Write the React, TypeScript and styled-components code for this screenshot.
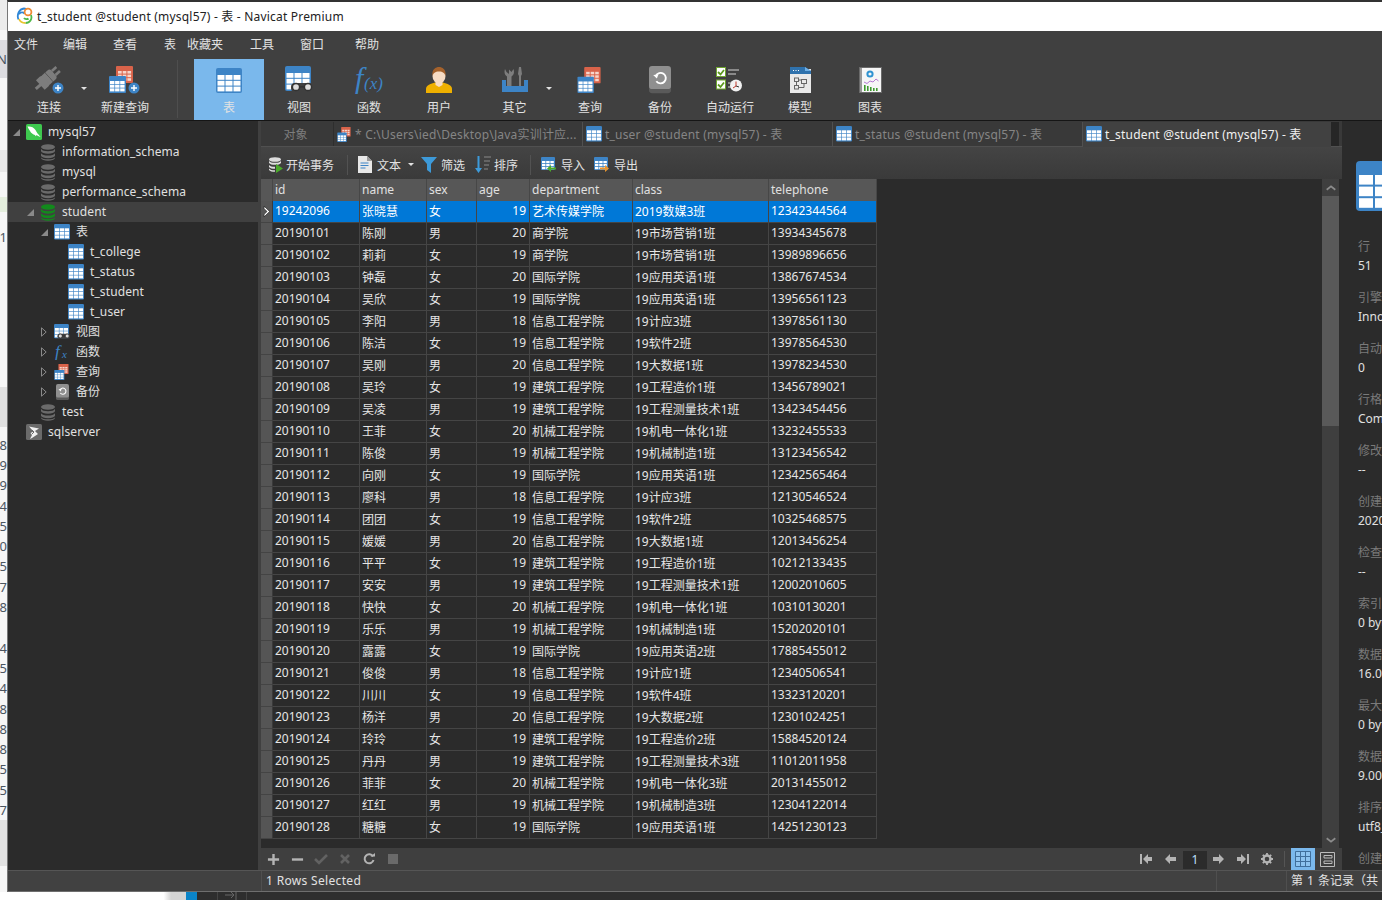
import React from 'react';
import { createGlobalStyle, styled } from 'styled-components';

const TABLE_COLUMNS = '12px 87px 67px 50px 53px 103px 136px 108px';

const rows = [
  ['19242096', '张晓慧', '女', '19', '艺术传媒学院', '2019数媒3班', '12342344564'],
  ['20190101', '陈刚', '男', '20', '商学院', '19市场营销1班', '13934345678'],
  ['20190102', '莉莉', '女', '19', '商学院', '19市场营销1班', '13989896656'],
  ['20190103', '钟磊', '女', '20', '国际学院', '19应用英语1班', '13867674534'],
  ['20190104', '吴欣', '女', '19', '国际学院', '19应用英语1班', '13956561123'],
  ['20190105', '李阳', '男', '18', '信息工程学院', '19计应3班', '13978561130'],
  ['20190106', '陈洁', '女', '19', '信息工程学院', '19软件2班', '13978564530'],
  ['20190107', '吴刚', '男', '20', '信息工程学院', '19大数据1班', '13978234530'],
  ['20190108', '吴玲', '女', '19', '建筑工程学院', '19工程造价1班', '13456789021'],
  ['20190109', '吴凌', '男', '19', '建筑工程学院', '19工程测量技术1班', '13423454456'],
  ['20190110', '王菲', '女', '20', '机械工程学院', '19机电一体化1班', '13232455533'],
  ['20190111', '陈俊', '男', '19', '机械工程学院', '19机械制造1班', '13123456542'],
  ['20190112', '向刚', '女', '19', '国际学院', '19应用英语1班', '12342565464'],
  ['20190113', '廖科', '男', '18', '信息工程学院', '19计应3班', '12130546524'],
  ['20190114', '团团', '女', '19', '信息工程学院', '19软件2班', '10325468575'],
  ['20190115', '媛媛', '男', '20', '信息工程学院', '19大数据1班', '12013456254'],
  ['20190116', '平平', '女', '19', '建筑工程学院', '19工程造价1班', '10212133435'],
  ['20190117', '安安', '男', '19', '建筑工程学院', '19工程测量技术1班', '12002010605'],
  ['20190118', '快快', '女', '20', '机械工程学院', '19机电一体化1班', '10310130201'],
  ['20190119', '乐乐', '男', '19', '机械工程学院', '19机械制造1班', '15202020101'],
  ['20190120', '露露', '女', '19', '国际学院', '19应用英语2班', '17885455012'],
  ['20190121', '俊俊', '男', '18', '信息工程学院', '19计应1班', '12340506541'],
  ['20190122', '川川', '女', '19', '信息工程学院', '19软件4班', '13323120201'],
  ['20190123', '杨洋', '男', '20', '信息工程学院', '19大数据2班', '12301024251'],
  ['20190124', '玲玲', '女', '19', '建筑工程学院', '19工程造价2班', '15884520124'],
  ['20190125', '丹丹', '男', '19', '建筑工程学院', '19工程测量技术3班', '11012011958'],
  ['20190126', '菲菲', '女', '20', '机械工程学院', '19机电一体化3班', '20131455012'],
  ['20190127', '红红', '男', '19', '机械工程学院', '19机械制造3班', '12304122014'],
  ['20190128', '糖糖', '女', '19', '国际学院', '19应用英语1班', '14251230123'],
];

const menus = [
  { label: '文件', gap: 6 },
  { label: '编辑', gap: 25 },
  { label: '查看', gap: 26 },
  { label: '表', gap: 27 },
  { label: '收藏夹', gap: 11 },
  { label: '工具', gap: 27 },
  { label: '窗口', gap: 26 },
  { label: '帮助', gap: 31 },
];

const infoFields = [
  ['行', '51'],
  ['引擎', 'InnoDB'],
  ['自动递增', '0'],
  ['行格式', 'Compact'],
  ['修改日期', '--'],
  ['创建日期', '2020-06-18'],
  ['检查时间', '--'],
  ['索引长度', '0 bytes'],
  ['数据长度', '16.00 KB'],
  ['最大数据长度', '0 bytes'],
  ['数据可用空间', '9.00 MB'],
  ['排序规则', 'utf8_general_ci'],
  ['创建选项', ''],
];

// the neighbouring window that peeks out at the left of Navicat
const stripBands = [
  { h: 30, bg: '#ececec', ch: '' },
  { h: 10, bg: '#f6f6f6', ch: '' },
  { h: 38, bg: '#dcdce0', ch: 'N' },
  { h: 72, bg: '#f6f6f6', ch: '' },
  { h: 22, bg: '#e8e8e8', ch: '' },
  { h: 25, bg: '#f6f6f6', ch: '' },
  { h: 15, bg: '#e4eedd', ch: '' },
  { h: 15, bg: '#f6f6f6', ch: '' },
  { h: 20, bg: '#f6f6f6', ch: '1' },
  { h: 140, bg: '#f6f6f6', ch: '' },
  { h: 40, bg: '#e0e0e0', ch: '' },
  { h: 8, bg: '#f6f6f6', ch: '' },
  { h: 20, bg: '#f6f6f6', ch: '8' },
  ...['9', '9', '4', '5', '0', '5', '7', '8', '', '4', '5', '4', '8', '8', '8', '5', '5', '7'].map((ch) => ({
    h: 20.3,
    bg: '#f6f6f6',
    ch,
  })),
  { h: 46, bg: '#e2e2e2', ch: '' },
  { h: 40, bg: '#f6f6f6', ch: '' },
];

const Cells = ({ x, y, w, h, gap, nx = 3, ny = 3, fill = '#fff' }: any) => (
  <>
    {Array.from({ length: ny }).flatMap((_, r) =>
      Array.from({ length: nx }).map((_, c) => (
        <rect key={`${r}-${c}`} x={x + c * (w + gap)} y={y + r * (h + gap)} width={w} height={h} fill={fill} />
      )),
    )}
  </>
);

const TableIcon = ({ size = 16 }: { size?: number }) => (
  <svg width={size} height={(size * 25) / 26} viewBox="0 0 26 25">
    <rect width="26" height="25" rx="2" fill="#3d84c6" />
    <Cells x={1.5} y={7} w={7} h={4.8} gap={1} />
  </svg>
);

const QueryShape = () => (
  <>
    <rect x="7" y="0" width="17" height="17" rx="1" fill="#d9634a" />
    <Cells x={9} y={5} w={3.7} h={2.6} gap={1} fill="#f6d5cb" />
    <rect x="0" y="10" width="17" height="17" rx="1" fill="#3d84c6" />
    <Cells x={1} y={15} w={4.4} h={3} gap={0.7} />
  </>
);

const QueryIcon = ({ size = 26 }: { size?: number }) => (
  <svg width={size} height={size} viewBox="0 0 26 27">
    <QueryShape />
  </svg>
);

const PlusBadge = ({ cx, cy }: { cx: number; cy: number }) => (
  <>
    <circle cx={cx} cy={cy} r="5.5" fill="#3d84c6" />
    <path d={`M${cx - 3} ${cy}h6M${cx} ${cy - 3}v6`} stroke="#fff" strokeWidth="1.4" />
  </>
);

const ConnectIcon = () => (
  <svg width="32" height="28" viewBox="0 0 32 28">
    <g fill="#7d7d7d" transform="rotate(-42 14 13)">
      <rect x="-1" y="11.4" width="7" height="3" />
      <path d="M5 6.5h5a4 4 0 0 1 0 13H5z" />
      <rect x="12.5" y="7" width="4" height="12" />
      <path d="M17 7h3a3 3 0 0 1 3 3v6a3 3 0 0 1-3 3h-3z" />
      <rect x="23" y="9" width="6" height="2.6" />
      <rect x="23" y="14.4" width="6" height="2.6" />
    </g>
    <PlusBadge cx={25} cy={22} />
  </svg>
);

const NewQueryIcon = () => (
  <svg width="32" height="28" viewBox="0 0 32 28">
    <QueryShape />
    <PlusBadge cx={25} cy={22} />
  </svg>
);

const ViewIcon = ({ size = 28 }: { size?: number }) => (
  <svg width={size} height={size} viewBox="0 0 28 28">
    <rect width="26" height="25" rx="2" fill="#3d84c6" />
    <Cells x={1.5} y={7} w={7} h={4.8} gap={1} />
    <rect x="6" y="17" width="22" height="9" rx="4" fill="#404040" />
    <circle cx="11" cy="21" r="3.6" fill="#ddd" stroke="#333" strokeWidth="1.5" />
    <circle cx="23" cy="21" r="3.6" fill="#ddd" stroke="#333" strokeWidth="1.5" />
    <rect x="14" y="20" width="6" height="1.6" fill="#333" />
  </svg>
);

const FunctionIcon = ({ size = 28 }: { size?: number }) => (
  <svg width={size + 4} height={size} viewBox="0 0 32 28">
    <text x="2" y="22" fontFamily="'Liberation Serif', serif" fontStyle="italic" fontSize="30" fill="#3d84c6">
      f
    </text>
    <text x="11" y="23" fontFamily="'Liberation Serif', serif" fontStyle="italic" fontSize="17" fill="#3d84c6">
      (x)
    </text>
  </svg>
);

const UserIcon = () => (
  <svg width="26" height="28" viewBox="0 0 26 28">
    <path d="M0 27v-4c0-4 5-5.5 9-6.5h8c4 1 9 2.5 9 6.5v4z" fill="#efb000" />
    <path d="M9.500 15h7v4l-3.500 2-3.500-2z" fill="#f7dcc4" />
    <ellipse cx="13" cy="10" rx="6.5" ry="7.500" fill="#f7dcc4" />
    <path d="M6.500 10C5.500 3 10 1 13 1s7.500 2 6.500 9c-1-3-2.500-4.500-6.500-4.500S7.500 7 6.500 10z" fill="#a5622c" />
  </svg>
);

const OtherIcon = () => (
  <svg width="26" height="28" viewBox="0 0 26 28">
    <path d="M7 3.500V8L4.500 6 3 3c-1 3-.5 6 2 7.500V20h4.500v-9.500C12 9 12.500 6 11.500 3L9.500 6z" fill="#7d7d7d" />
    <path d="M17 1h2l1 7-1 2v10h-2V10l-1-2z" fill="#7d7d7d" />
    <path d="M0 14h4v6h18v-6h4v12H0z" fill="#3d84c6" />
  </svg>
);

const BackupIcon = ({ size = 22 }: { size?: number }) => (
  <svg width={size} height={(size * 26) / 21} viewBox="0 0 21 26">
    <rect y="3" width="21" height="23" rx="3" fill="#5a5a5a" />
    <rect width="21" height="22" rx="3" fill="#8f8f8f" />
    <path d="M6.500 9.500a5 5 0 1 1 .5 5" fill="none" stroke="#fff" strokeWidth="1.8" />
    <path d="M4 8.500l5-.5-1.500 4z" fill="#fff" />
  </svg>
);

const AutoRunIcon = () => (
  <svg width="28" height="26" viewBox="0 0 28 26">
    <rect x="0.5" y="0.5" width="9" height="9" fill="#fff" stroke="#6ea52f" />
    <path d="M2 5l2.500 2.500L8 3" fill="none" stroke="#5c9a1d" strokeWidth="1.8" />
    <rect x="0.5" y="13" width="9" height="9" fill="#fff" stroke="#6ea52f" />
    <path d="M2 17.500L4.500 20 8 15.500" fill="none" stroke="#5c9a1d" strokeWidth="1.8" />
    <rect x="12" y="2" width="11" height="2" fill="#8a8a8a" />
    <rect x="12" y="6" width="8" height="2" fill="#8a8a8a" />
    <rect x="12" y="15" width="3" height="2" fill="#8a8a8a" />
    <rect x="12" y="19" width="3" height="2" fill="#8a8a8a" />
    <circle cx="20" cy="18.500" r="6" fill="#f2f2f2" />
    <path d="M20 14.500V19l-3 2" fill="none" stroke="#c0392b" strokeWidth="1" />
    <path d="M20 19l3 1" fill="none" stroke="#333" strokeWidth="1" />
  </svg>
);

const ModelIcon = () => (
  <svg width="21" height="26" viewBox="0 0 21 26">
    <rect y="2" width="21" height="24" fill="#e9e9e9" />
    <path d="M0 0h15l6 4v3H0z" fill="#2f72ad" />
    <path d="M15 0l6 4h-6z" fill="#6fb0e6" />
    <path d="M3 3.500h1M5.500 3.500h1M8 3.500h1" stroke="#fff" />
    <g fill="none" stroke="#666" strokeWidth="1">
      <rect x="4.5" y="11" width="4" height="3.5" />
      <rect x="11.5" y="12.5" width="5" height="4" />
      <rect x="4.5" y="18.5" width="4" height="3.5" />
      <path d="M8.500 13h3M6.500 14.500v4M8.500 20.500H14v-4" />
    </g>
  </svg>
);

const ChartIcon = () => (
  <svg width="23" height="26" viewBox="0 0 23 26">
    <rect x="0.5" y="0.5" width="22" height="25" fill="#f6f6f6" stroke="#6b6b6b" />
    <rect x="1" y="1" width="2" height="24" fill="#9a9a9a" />
    <circle cx="11" cy="7" r="2.6" fill="none" stroke="#2f93d1" strokeWidth="2" />
    <path d="M5 15l3 1.500 3-2.500 3 1 3-3 2.500 2" fill="none" stroke="#b67ad3" strokeWidth="1" />
    <g fill="#3f9a2f">
      <rect x="5" y="18" width="1.6" height="6" />
      <rect x="8" y="19" width="1.6" height="5" />
      <rect x="11" y="20" width="1.6" height="4" />
      <rect x="14" y="21" width="1.6" height="3" />
      <rect x="17" y="21" width="1.6" height="3" />
    </g>
  </svg>
);

const DbIcon = ({ color = '#6a6a6a' }: { color?: string }) => (
  <svg width="16" height="17" viewBox="0 0 16 17">
    <g fill={color}>
      <ellipse cx="8" cy="3" rx="7" ry="2.8" />
      <path d="M1 4.800c1 1.800 3.500 2.400 7 2.400s6-.6 7-2.400v2.500c-.5 1.700-3.500 2.400-7 2.400s-6.500-.7-7-2.400z" />
      <path d="M1 9.300c1 1.700 3.500 2.300 7 2.300s6-.6 7-2.300v2.500c-.5 1.700-3.500 2.400-7 2.400s-6.500-.7-7-2.400z" />
      <path d="M1 13.500c1 1.300 3.500 1.800 7 1.800s6-.5 7-1.800v.5c-.5 1.800-3.500 2.700-7 2.700S1.500 15.800 1 14z" />
    </g>
  </svg>
);

const MysqlIcon = () => (
  <svg width="16" height="16" viewBox="0 0 16 16">
    <rect width="16" height="16" rx="1.5" fill="#3ec94f" />
    <path d="M1.500 2.500c3-.5 6 .5 8 3.500 1 1.500 1.500 3 3 4.500l2 2.500c-2-.5-3-1.500-4-2-.5 1.500-1 1.500-1.500 0-2-.5-4-2-5-4-1-1.500-2-3-2.500-4.500z" fill="#fff" />
  </svg>
);

const SqlServerIcon = () => (
  <svg width="16" height="16" viewBox="0 0 16 16">
    <rect width="16" height="16" rx="1.5" fill="#6a6a6a" />
    <path d="M3 2.500l10 2-4 2.500 3 3-6 4-2 1 2-4L4.500 9l3-1.500z" fill="#f0f0f0" />
    <path d="M6 6l2 2-2 2" fill="none" stroke="#6a6a6a" />
  </svg>
);

const SmallFx = () => (
  <svg width="16" height="16" viewBox="0 0 16 16">
    <text x="1" y="13" fontFamily="'Liberation Serif', serif" fontStyle="italic" fontSize="17" fill="#3d84c6">
      f
    </text>
    <text x="8" y="14" fontFamily="'Liberation Serif', serif" fontStyle="italic" fontSize="11" fill="#3d84c6">
      x
    </text>
  </svg>
);

const ExpandedArrow = () => (
  <svg width="7" height="7" viewBox="0 0 7 7">
    <path d="M7 0v7H0z" fill="#8a8a8a" />
  </svg>
);

const CollapsedArrow = () => (
  <svg width="6" height="10" viewBox="0 0 6 10">
    <path d="M.5.800L5.200 5 .5 9.200z" fill="none" stroke="#8a8a8a" />
  </svg>
);

const treeItems: { depth: number; label: string; icon: React.ReactNode; arrow?: 'open' | 'closed'; active?: boolean }[] = [
  { depth: 0, label: 'mysql57', icon: <MysqlIcon />, arrow: 'open' },
  { depth: 1, label: 'information_schema', icon: <DbIcon /> },
  { depth: 1, label: 'mysql', icon: <DbIcon /> },
  { depth: 1, label: 'performance_schema', icon: <DbIcon /> },
  { depth: 1, label: 'student', icon: <DbIcon color="#128a1c" />, arrow: 'open', active: true },
  { depth: 2, label: '表', icon: <TableIcon />, arrow: 'open' },
  { depth: 3, label: 't_college', icon: <TableIcon /> },
  { depth: 3, label: 't_status', icon: <TableIcon /> },
  { depth: 3, label: 't_student', icon: <TableIcon /> },
  { depth: 3, label: 't_user', icon: <TableIcon /> },
  { depth: 2, label: '视图', icon: <ViewIcon size={16} />, arrow: 'closed' },
  { depth: 2, label: '函数', icon: <SmallFx />, arrow: 'closed' },
  { depth: 2, label: '查询', icon: <QueryIcon size={16} />, arrow: 'closed' },
  { depth: 2, label: '备份', icon: <BackupIcon size={13} />, arrow: 'closed' },
  { depth: 1, label: 'test', icon: <DbIcon /> },
  { depth: 0, label: 'sqlserver', icon: <SqlServerIcon /> },
];

const DbPlayIcon = () => (
  <svg width="16" height="16" viewBox="0 0 16 16">
    <ellipse cx="7" cy="2.500" rx="6" ry="2.3" fill="#ddd" />
    <path d="M1 4c1 1.300 3 1.800 6 1.800S12 5.300 13 4v2c-1 1.300-3 1.800-6 1.800S2 7.300 1 6z" fill="#ddd" />
    <path d="M1 8c1 1.300 3 1.800 6 1.800v2C4 11.800 2 11.300 1 10z" fill="#ddd" />
    <path d="M1 11.500c1 1.300 3 1.800 6 1.800v1.500c-3 0-5-.5-6-1.800z" fill="#ddd" />
    <path d="M8 7l7 4.500L8 16z" fill="#4aa92a" />
  </svg>
);

const DocIcon = () => (
  <svg width="14" height="17" viewBox="0 0 14 17">
    <path d="M0 0h9l5 5v12H0z" fill="#e8e8e8" />
    <path d="M9 0l5 5H9z" fill="#9a9a9a" />
    <path d="M2.500 7h8M2.500 9.500h8M2.500 12h5" stroke="#3d84c6" />
  </svg>
);

const FilterIcon = () => (
  <svg width="16" height="16" viewBox="0 0 16 16">
    <path d="M0 0h16L10 7v9L6 13V7z" fill="#3d9ad9" />
  </svg>
);

const SortIcon = () => (
  <svg width="17" height="17" viewBox="0 0 17 17">
    <path d="M3.500 0h2v12H8l-3.500 5L1 12h2.500z" fill="#3d9ad9" />
    <path d="M10 1h7M10 5h6M10 9h5M10 13h4" stroke="#8a8a8a" />
  </svg>
);

const TransferIcon = ({ color, flip }: { color: string; flip?: boolean }) => (
  <svg width="16" height="16" viewBox="0 0 16 16">
    <rect width="14" height="13" rx="1" fill="#3d84c6" />
    <Cells x={1} y={4} w={3.4} h={2.2} gap={0.8} />
    <path d={flip ? 'M6 10.500h5V8l4 3.500-4 3.500v-2.500H6z' : 'M15 10.500h-5V8l-4 3.500 4 3.500v-2.500h5z'} fill={color} />
  </svg>
);

const Glyph = ({ d, color = '#b4b4b4', size = 14, width = 2.6 }: { d: string; color?: string; size?: number; width?: number }) => (
  <svg width={size} height={size} viewBox="0 0 14 14">
    <path d={d} fill="none" stroke={color} strokeWidth={width} />
  </svg>
);

const SolidGlyph = ({ d, color = '#b4b4b4' }: { d: string; color?: string }) => (
  <svg width="14" height="14" viewBox="0 0 14 14">
    <path d={d} fill={color} />
  </svg>
);

const NavicatLogo = () => (
  <svg width="17" height="17" viewBox="0 0 17 17">
    <g fill="none" strokeWidth="1.8">
      <path d="M2.500 12.500C.5 8 3 2 8 1.500c1 0 1.500.2 2 .5" stroke="#2f86d6" />
      <path d="M3 7c2-2 4-2 5.500-.5" stroke="#2f86d6" />
      <circle cx="12" cy="5" r="3.4" stroke="#ee8a33" />
      <path d="M15 8c1.500 4-1 8-5.500 8" stroke="#4fb848" />
      <path d="M9.500 16c-3 0-5.500-1.500-6.500-4" stroke="#e9c532" />
      <path d="M8 11c1 1.500 3.500 1.500 4.500.5" stroke="#4fb848" />
    </g>
  </svg>
);

const tools = [
  { label: '连接', icon: <ConnectIcon />, w: 82, arrow: true },
  { label: '新建查询', icon: <NewQueryIcon /> },
];
const objectTools = [
  { label: '表', icon: <TableIcon size={26} />, active: true },
  { label: '视图', icon: <ViewIcon /> },
  { label: '函数', icon: <FunctionIcon /> },
  { label: '用户', icon: <UserIcon /> },
  { label: '其它', icon: <OtherIcon />, w: 81, arrow: true },
  { label: '查询', icon: <QueryIcon /> },
  { label: '备份', icon: <BackupIcon /> },
  { label: '自动运行', icon: <AutoRunIcon /> },
  { label: '模型', icon: <ModelIcon /> },
  { label: '图表', icon: <ChartIcon /> },
];

const ToolItem = ({ label, icon, w = 70, arrow, active }: any) => (
  <ToolButton $w={w} $active={active}>
    <ToolIcon>{icon}</ToolIcon>
    <ToolLabel>{label}</ToolLabel>
    {arrow && (
      <ToolArrow>
        <DownArrow />
      </ToolArrow>
    )}
  </ToolButton>
);

const tabs = [
  { label: '* C:\\Users\\ied\\Desktop\\Java实训计应...', icon: <QueryIcon size={15} />, w: 249 },
  { label: 't_user @student (mysql57) - 表', icon: <TableIcon />, w: 250 },
  { label: 't_status @student (mysql57) - 表', icon: <TableIcon />, w: 250 },
  { label: 't_student @student (mysql57) - 表', icon: <TableIcon />, w: 248, active: true },
];

export default function App() {
  return (
    <>
      <GlobalStyle />
      <Page>
        <Upper>
          <LeftStrip>
            {stripBands.map((band, index) => (
              <StripBand key={index} $h={band.h} $bg={band.bg}>
                {band.ch}
              </StripBand>
            ))}
          </LeftStrip>
          <AppWindow>
            <TitleBar>
              <NavicatLogo />
              <TitleText>t_student @student (mysql57) - 表 - Navicat Premium</TitleText>
            </TitleBar>
            <MenuBar>
              {menus.map((menu) => (
                <MenuItem key={menu.label} $gap={menu.gap}>
                  {menu.label}
                </MenuItem>
              ))}
            </MenuBar>
            <ToolBar>
              {tools.map((tool) => (
                <ToolItem key={tool.label} {...tool} />
              ))}
              <ToolDivider />
              {objectTools.map((tool) => (
                <ToolItem key={tool.label} {...tool} />
              ))}
            </ToolBar>
            <Body>
              <Sidebar>
                {treeItems.map((item) => (
                  <TreeRow key={item.label + item.depth} $depth={item.depth} $active={item.active}>
                    <TreeArrow>
                      {item.arrow === 'open' && <ExpandedArrow />}
                      {item.arrow === 'closed' && <CollapsedArrow />}
                    </TreeArrow>
                    <TreeIcon>{item.icon}</TreeIcon>
                    <TreeLabel>{item.label}</TreeLabel>
                  </TreeRow>
                ))}
              </Sidebar>
              <Center>
                <TabBar>
                  <ObjectTab>对象</ObjectTab>
                  {tabs.map((tab) => (
                    <Tab key={tab.label} $w={tab.w} $active={tab.active}>
                      <TabIcon>{tab.icon}</TabIcon>
                      {tab.label}
                    </Tab>
                  ))}
                  <TabOverflow />
                </TabBar>
                <DataToolbar>
                  <DataTool $gap={2} $mr={10}>
                    <DbPlayIcon />
                    开始事务
                  </DataTool>
                  <DataDivider />
                  <DataTool $gap={5} $mr={7}>
                    <DocIcon />
                    文本
                    <DataArrow>
                      <DownArrow />
                    </DataArrow>
                  </DataTool>
                  <DataTool $gap={4} $mr={9}>
                    <FilterIcon />
                    筛选
                  </DataTool>
                  <DataTool $gap={3} $mr={9}>
                    <SortIcon />
                    排序
                  </DataTool>
                  <DataDivider />
                  <DataTool $gap={4} $mr={9}>
                    <TransferIcon color="#4aa92a" />
                    导入
                  </DataTool>
                  <DataTool $gap={4} $mr={9}>
                    <TransferIcon color="#e8952f" flip />
                    导出
                  </DataTool>
                </DataToolbar>
                <GridArea>
                  <Grid>
                    <GridRow>
                      <HeaderCell />
                      {['id', 'name', 'sex', 'age', 'department', 'class', 'telephone'].map((title) => (
                        <HeaderCell key={title}>{title}</HeaderCell>
                      ))}
                    </GridRow>
                    {rows.map((row, rowIndex) => (
                      <GridRow key={row[0]}>
                        <GutterCell>
                          {rowIndex === 0 && (
                            <svg width="8" height="13" viewBox="0 0 7 11">
                              <path d="M1 .8l4.800 4.700L1 10.200V8l2.500-2.500L1 3z" fill="#fff" stroke="#111" strokeWidth=".5" />
                            </svg>
                          )}
                        </GutterCell>
                        {row.map((value, cellIndex) => (
                          <DataCell key={cellIndex} $selected={rowIndex === 0} $right={cellIndex === 3}>
                            {value}
                          </DataCell>
                        ))}
                      </GridRow>
                    ))}
                  </Grid>
                  <VScroll>
                    <ScrollButton>
                      <Glyph d="M2 9l5-4 5 4" color="#8c8c8c" size={12} width={2} />
                    </ScrollButton>
                    <ScrollThumb />
                    <ScrollTrack />
                    <ScrollButton>
                      <Glyph d="M2 5l5 4 5-4" color="#8c8c8c" size={12} width={2} />
                    </ScrollButton>
                  </VScroll>
                </GridArea>
                <Footer>
                  <FooterIcon>
                    <Glyph d="M7 1v12M1 7h12" size={13} />
                  </FooterIcon>
                  <FooterIcon>
                    <Glyph d="M1 7h12" size={13} />
                  </FooterIcon>
                  <FooterIcon>
                    <Glyph d="M1 7l4 4 8-8" color="#626262" />
                  </FooterIcon>
                  <FooterIcon>
                    <Glyph d="M3 3l8 8M11 3l-8 8" color="#626262" />
                  </FooterIcon>
                  <FooterIcon>
                    <svg width="12" height="12" viewBox="0 0 12 12">
                      <path d="M10 3.500A4.500 4.500 0 1 0 10.500 7" fill="none" stroke="#b4b4b4" strokeWidth="2" />
                      <path d="M7.500 3.500H12V0z" fill="#b4b4b4" />
                    </svg>
                  </FooterIcon>
                  <FooterIcon>
                    <SolidGlyph d="M2 2h10v10H2z" color="#6a6a6a" />
                  </FooterIcon>
                  <FooterSpacer />
                  <FooterIcon>
                    <SolidGlyph d="M1 2h2v10H1zM4 7l5-5v3h4v4H9v3z" />
                  </FooterIcon>
                  <FooterIcon>
                    <SolidGlyph d="M2 7l5-5v3h6v4H7v3z" />
                  </FooterIcon>
                  <PageInput>1</PageInput>
                  <FooterIcon>
                    <SolidGlyph d="M12 7L7 2v3H1v4h6v3z" />
                  </FooterIcon>
                  <FooterIcon>
                    <SolidGlyph d="M13 2h-2v10h2zM10 7L5 2v3H1v4h4v3z" />
                  </FooterIcon>
                  <FooterIcon>
                    <svg width="12" height="12" viewBox="0 0 12 12">
                      <circle cx="6" cy="6" r="3.5" fill="none" stroke="#b4b4b4" strokeWidth="2.4" />
                      <path d="M6 0v2M6 10v2M0 6h2M10 6h2M1.800 1.800l1.400 1.400M8.800 8.800l1.400 1.400M1.800 10.200l1.400-1.400M8.800 3.200l1.400-1.400" stroke="#b4b4b4" strokeWidth="1.8" />
                    </svg>
                  </FooterIcon>
                  <FooterDivider />
                  <ViewToggle $active>
                    <svg width="16" height="16" viewBox="0 0 16 16">
                      <path d="M.5.500h15v15H.5zM.5 5.500h15M.5 10.500h15M5.500.5v15M10.500.5v15" fill="#8cc3f0" stroke="#3f6f9c" />
                    </svg>
                  </ViewToggle>
                  <ViewToggle>
                    <svg width="15" height="15" viewBox="0 0 15 15">
                      <path d="M.5.500h14v14H.5zM4 3.500h8V6H4zM4 9h8v2.500H4z" fill="none" stroke="#bbb" />
                    </svg>
                  </ViewToggle>
                </Footer>
              </Center>
              <InfoPanel>
                <InfoIcon>
                  <TableIcon size={52} />
                </InfoIcon>
                {infoFields.map(([label, value], index) => (
                  <InfoField key={index}>
                    <InfoLabel>{label}</InfoLabel>
                    <InfoValue>{value}</InfoValue>
                  </InfoField>
                ))}
              </InfoPanel>
            </Body>
            <StatusBar>
              <StatusBlank />
              <StatusSelected>1 Rows Selected</StatusSelected>
              <StatusGap />
              <StatusRecords>第 1 条记录（共 51 条）于第 1 页</StatusRecords>
            </StatusBar>
          </AppWindow>
        </Upper>
        <TaskStrip>
          <TaskLight />
          <TaskBlue />
          <TaskDark $w={21} />
          <TaskDark $w={29}>
            <svg width="14" height="8" viewBox="0 0 14 8">
              <path d="M0 3h8M6 0l3 3-3 3M11 0v8" fill="none" stroke="#666" />
            </svg>
          </TaskDark>
          <TaskRest />
        </TaskStrip>
      </Page>
    </>
  );
}

const GlobalStyle = createGlobalStyle`
  html, body {
    margin: 0;
    padding: 0;
    background: #2b2b2b;
  }
  body {
    font-family: 'Noto Sans', 'Noto Sans CJK SC', sans-serif;
    font-size: 12px;
    color: #dcdcdc;
  }
`;

const Page = styled.div`
  display: flex;
  flex-direction: column;
  overflow: hidden;
  width: 1382px;
  height: 900px;
`;

const Upper = styled.div`
  display: flex;
  flex: none;
  height: 892px;
`;

const LeftStrip = styled.div`
  display: flex;
  flex: none;
  flex-direction: column;
  overflow: hidden;
  width: 7px;
  background: #f6f6f6;
  box-shadow: inset -2px 0 2px -1px #bbb;
`;

const StripBand = styled.div<{ $h: number; $bg: string }>`
  display: flex;
  flex: none;
  justify-content: flex-end;
  overflow: hidden;
  height: ${({ $h }) => $h}px;
  background: ${({ $bg }) => $bg};
  color: #4a5560;
  font-size: 13px;
  line-height: ${({ $h }) => $h}px;
`;

const AppWindow = styled.div`
  display: flex;
  flex: 1;
  flex-direction: column;
  min-width: 0;
  border-top: 2px solid #333;
  border-bottom: 1px solid #6e6e6e;
  border-left: 1px solid #777;
  background: #404040;
`;

const TitleBar = styled.div`
  display: flex;
  flex: none;
  gap: 4px;
  align-items: center;
  height: 29px;
  padding: 0 0 2px 8px;
  box-sizing: border-box;
  background: #fff;
`;

const TitleText = styled.span`
  color: #222;
  font-size: 12px;
  letter-spacing: 0.2px;
  white-space: nowrap;
`;

const MenuBar = styled.div`
  display: flex;
  flex: none;
  align-items: center;
  height: 28px;
  padding-bottom: 2px;
  box-sizing: border-box;
  background: #404040;
`;

const MenuItem = styled.span<{ $gap: number }>`
  margin-left: ${({ $gap }) => $gap}px;
  color: #e2e2e2;
  white-space: nowrap;
`;

const ToolBar = styled.div`
  display: flex;
  flex: none;
  height: 61px;
  background: #404040;
`;

const ToolButton = styled.div<{ $w: number; $active?: boolean }>`
  display: flex;
  position: relative;
  flex: none;
  flex-direction: column;
  align-items: center;
  width: ${({ $w }) => $w}px;
  background: ${({ $active }) => ($active ? '#7ab8ec' : 'transparent')};
`;

const ToolIcon = styled.div`
  display: flex;
  justify-content: center;
  align-items: center;
  height: 28px;
  margin-top: 7px;
`;

const ToolLabel = styled.span`
  margin-top: 5px;
  color: #e2e2e2;
  line-height: 18px;
  white-space: nowrap;
`;

const ToolArrow = styled.div`
  position: absolute;
  top: 28px;
  right: 3px;
`;

const DownArrow = styled.div`
  width: 0;
  height: 0;
  border-top: 3px solid #e2e2e2;
  border-right: 3px solid transparent;
  border-left: 3px solid transparent;
`;

const ToolDivider = styled.div`
  flex: none;
  width: 1px;
  height: 58px;
  margin: 1px 16px 0 17px;
  background: #4e4e4e;
`;

const Body = styled.div`
  display: flex;
  flex: 1;
  min-height: 0;
  border-top: 1px solid #151515;
`;

const Sidebar = styled.div`
  flex: none;
  width: 250px;
  margin-right: 3px;
  padding-top: 1px;
  box-sizing: border-box;
  background: #2b2b2b;
`;

const TreeRow = styled.div<{ $depth: number; $active?: boolean }>`
  display: flex;
  align-items: center;
  height: 20px;
  padding-left: ${({ $depth }) => 4 + $depth * 14}px;
  background: ${({ $active }) => ($active ? '#404040' : 'transparent')};
`;

const TreeArrow = styled.div`
  display: flex;
  flex: none;
  justify-content: center;
  align-items: center;
  width: 8px;
  margin-right: 6px;
`;

const TreeIcon = styled.div`
  display: flex;
  flex: none;
  justify-content: center;
  align-items: center;
  width: 16px;
  height: 20px;
  margin-right: 6px;
`;

const TreeLabel = styled.span`
  margin-bottom: 2px;
  color: #e0e0e0;
  letter-spacing: 0.1px;
  white-space: nowrap;
`;

const Center = styled.div`
  display: flex;
  flex: 1;
  flex-direction: column;
  min-width: 0;
`;

const TabBar = styled.div`
  display: flex;
  flex: none;
  height: 26px;
  padding-top: 1px;
  border-bottom: 1px solid #505050;
  box-sizing: border-box;
  background: #393939;
`;

const ObjectTab = styled.div`
  display: flex;
  flex: none;
  justify-content: center;
  align-items: center;
  width: 72px;
  margin-left: 1px;
  padding-right: 4px;
  border-right: 1px solid #2e2e2e;
  box-sizing: border-box;
  color: #7d7d7d;
`;

const Tab = styled.div<{ $w: number; $active?: boolean }>`
  display: flex;
  flex: none;
  align-items: center;
  overflow: hidden;
  width: ${({ $w }) => $w}px;
  height: ${({ $active }) => ($active ? '25px' : '24px')};
  padding: 0 0 ${({ $active }) => ($active ? '1px' : '0')} 3px;
  border-right: 1px solid ${({ $active }) => ($active ? 'transparent' : '#505050')};
  box-sizing: border-box;
  background: ${({ $active }) => ($active ? '#414141' : 'transparent')};
  color: ${({ $active }) => ($active ? '#f0f0f0' : '#858585')};
  letter-spacing: 0.2px;
  white-space: nowrap;
`;

const TabIcon = styled.span`
  display: flex;
  flex: none;
  margin-right: 3px;
`;

const TabOverflow = styled.div`
  flex: none;
  width: 8px;
  background: #262626;
`;

const DataToolbar = styled.div`
  display: flex;
  flex: none;
  align-items: center;
  height: 32px;
  padding: 3px 0 0 7px;
  box-sizing: border-box;
  background: linear-gradient(#444, #3a3a3a);
`;

const DataTool = styled.div<{ $gap: number; $mr: number }>`
  display: flex;
  flex: none;
  gap: ${({ $gap }) => $gap}px;
  align-items: center;
  margin-right: ${({ $mr }) => $mr}px;
  color: #e2e2e2;
  white-space: nowrap;
`;

const DataArrow = styled.span`
  margin-left: 2px;
`;

const DataDivider = styled.div`
  flex: none;
  width: 1px;
  height: 20px;
  margin: 0 10px 0 3px;
  background: #525252;
`;

const GridArea = styled.div`
  display: flex;
  flex: 1;
  min-height: 0;
  background: #2b2b2b;
`;

const Grid = styled.div`
  flex: 1;
  min-width: 0;
`;

const GridRow = styled.div`
  display: grid;
  grid-template-columns: ${TABLE_COLUMNS};
  height: 22px;
`;

const HeaderCell = styled.div`
  display: flex;
  align-items: center;
  padding: 0 0 2px 2px;
  border-right: 1px solid #474747;
  box-sizing: border-box;
  background: #575757;
  color: #e0e0e0;
`;

const GutterCell = styled.div`
  display: flex;
  justify-content: center;
  align-items: center;
  border-right: 1px solid #3a3a3a;
  border-bottom: 1px solid #444;
  box-sizing: border-box;
  background: #555;
`;

const DataCell = styled.div<{ $selected?: boolean; $right?: boolean }>`
  display: flex;
  justify-content: ${({ $right }) => ($right ? 'flex-end' : 'flex-start')};
  align-items: center;
  overflow: hidden;
  padding: 0 3px 2px 2px;
  border-right: 1px solid #454545;
  border-bottom: 1px solid #454545;
  box-sizing: border-box;
  background: ${({ $selected }) => ($selected ? '#0078d7' : '#2b2b2b')};
  color: ${({ $selected }) => ($selected ? '#fff' : '#e6e6e6')};
  white-space: nowrap;
`;

const VScroll = styled.div`
  display: flex;
  flex: none;
  flex-direction: column;
  width: 17px;
  margin-right: 3px;
  background: #3f3f3f;
`;

const ScrollButton = styled.div`
  display: flex;
  flex: none;
  justify-content: center;
  align-items: center;
  height: 17px;
`;

const ScrollThumb = styled.div`
  flex: none;
  height: 230px;
  background: #595959;
`;

const ScrollTrack = styled.div`
  flex: 1;
`;

const Footer = styled.div`
  display: flex;
  flex: none;
  align-items: center;
  height: 22px;
  background: #3f3f3f;
`;

const FooterIcon = styled.div`
  display: flex;
  flex: none;
  justify-content: center;
  align-items: center;
  width: 24px;
`;

const FooterSpacer = styled.div`
  flex: 1;
`;

const PageInput = styled.div`
  flex: none;
  width: 24px;
  height: 18px;
  margin: 2px 0 0 1px;
  background: #2b2b2b;
  color: #bfe0ff;
  line-height: 18px;
  text-align: center;
`;

const FooterDivider = styled.div`
  flex: none;
  width: 1px;
  height: 16px;
  margin: 0 6px 0 5px;
  background: #555;
`;

const ViewToggle = styled.div<{ $active?: boolean }>`
  display: flex;
  flex: none;
  justify-content: center;
  align-items: center;
  width: 24px;
  height: 22px;
  background: ${({ $active }) => ($active ? '#7ab8ec' : 'transparent')};

  &:last-child {
    margin-right: 3px;
  }
`;

const InfoPanel = styled.div`
  flex: none;
  overflow: hidden;
  width: 40px;
  padding: 40px 0 0 16px;
  box-sizing: border-box;
  background: #2b2b2b;
`;

const InfoIcon = styled.div`
  display: flex;
  width: 52px;
  margin: 0 0 25px -2px;
`;

const InfoField = styled.div`
  width: 120px;
  margin-bottom: 11px;
`;

const InfoLabel = styled.div`
  height: 20px;
  padding-top: 1px;
  box-sizing: border-box;
  color: #7a7a7a;
  line-height: 20px;
  white-space: nowrap;
`;

const InfoValue = styled.div`
  height: 20px;
  color: #e0e0e0;
  line-height: 20px;
  white-space: nowrap;
`;

const StatusBar = styled.div`
  display: flex;
  flex: none;
  height: 21px;
  border-top: 1px solid #555;
  box-sizing: border-box;
  background: #414141;
  color: #e2e2e2;
  line-height: 20px;
`;

const StatusBlank = styled.div`
  flex: none;
  width: 253px;
`;

const StatusSelected = styled.div`
  flex: none;
  width: 956px;
  padding-left: 4px;
  border-left: 1px solid #4f4f4f;
  border-right: 1px solid #4f4f4f;
  box-sizing: border-box;
  letter-spacing: 0.33px;
`;

const StatusGap = styled.div`
  flex: none;
  width: 70px;
  border-right: 1px solid #4f4f4f;
  box-sizing: border-box;
`;

const StatusRecords = styled.div`
  padding-left: 4px;
  word-spacing: 1px;
  white-space: nowrap;
`;

const TaskStrip = styled.div`
  display: flex;
  flex: none;
  height: 8px;
`;

const TaskLight = styled.div`
  flex: none;
  width: 186px;
  background: linear-gradient(90deg, #fff 0, #fff 88%, #d4d4d4 92%);
`;

const TaskBlue = styled.div`
  flex: none;
  width: 11px;
  background: #0a84c8;
`;

const TaskDark = styled.div<{ $w: number }>`
  display: flex;
  flex: none;
  justify-content: center;
  width: ${({ $w }) => $w}px;
  border-right: 1px solid #444;
  box-sizing: border-box;
  background: #2e2e2e;
`;

const TaskRest = styled.div`
  flex: 1;
  background: #2e2e2e;
`;
